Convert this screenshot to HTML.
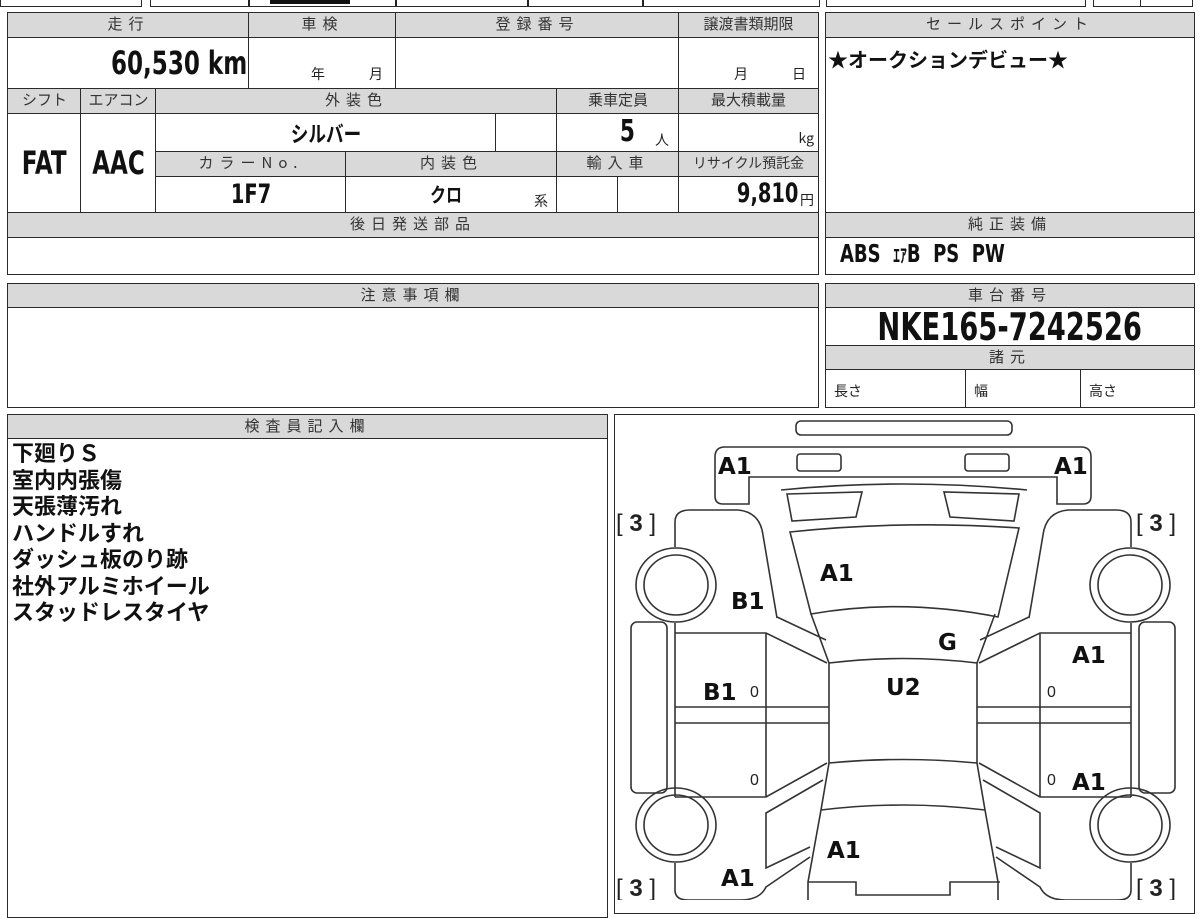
<!DOCTYPE html>
<html><head><meta charset="utf-8">
<style>
*{margin:0;padding:0;box-sizing:border-box}
body{width:1200px;height:900px;background:#fff;position:relative;overflow:hidden;font-family:"Liberation Sans","Noto Sans CJK JP",sans-serif;color:#111}
.c{position:absolute;border:1.5px solid #2a2a2a;background:#fff}
.h{background:#d9d9d9;font-family:"Noto Sans CJK JP",sans-serif;font-size:15px;color:#333;text-align:center;line-height:22px;letter-spacing:6px}
.h2{letter-spacing:0}
.n{font-family:"DejaVu Sans","Liberation Sans",sans-serif;font-weight:bold;color:#111}
.q{display:inline-block;transform:scaleX(.72)}
.s{position:absolute;font-family:"Noto Sans CJK JP",sans-serif;font-size:14px;color:#222}
.jp{font-family:"Noto Sans CJK JP",sans-serif;font-weight:bold}
</style></head><body>
<!-- top strip -->
<div class="c" style="left:0;top:-12px;width:142px;height:19px"></div>
<div class="c" style="left:150px;top:-12px;width:670px;height:19px"></div>
<div style="position:absolute;left:248px;top:0;width:1.5px;height:6px;background:#222"></div>
<div style="position:absolute;left:395px;top:0;width:1.5px;height:6px;background:#222"></div>
<div style="position:absolute;left:527px;top:0;width:1.5px;height:6px;background:#222"></div>
<div style="position:absolute;left:642px;top:0;width:1.5px;height:6px;background:#222"></div>
<div style="position:absolute;left:270px;top:-6px;width:80px;height:10px;background:#111"></div>
<div class="c" style="left:826px;top:-12px;width:260px;height:19px"></div>
<div class="c" style="left:1093px;top:-12px;width:49px;height:19px"></div>
<div class="c" style="left:1140px;top:-12px;width:53px;height:19px"></div>

<!-- main table -->
<div class="c h" style="left:7px;top:12px;width:243px;height:27px">走行</div>
<div class="c h" style="left:248px;top:12px;width:149px;height:27px">車検</div>
<div class="c h" style="left:395px;top:12px;width:285px;height:27px">登録番号</div>
<div class="c h h2" style="left:678px;top:12px;width:141px;height:27px">譲渡書類期限</div>
<div class="c n" style="left:7px;top:37px;width:243px;height:53px;font-size:32px;text-align:right;padding:6px 2px 0 0"><span class="q" style="transform-origin:right">60,530 km</span></div>
<div class="c" style="left:248px;top:37px;width:149px;height:53px"><span class="s" style="left:62px;top:26px">年</span><span class="s" style="left:120px;top:26px">月</span></div>
<div class="c" style="left:395px;top:37px;width:285px;height:53px"></div>
<div class="c" style="left:678px;top:37px;width:141px;height:53px"><span class="s" style="left:55px;top:26px">月</span><span class="s" style="left:113px;top:26px">日</span></div>

<div class="c h h2" style="left:7px;top:88px;width:75px;height:27px">シフト</div>
<div class="c h h2" style="left:80px;top:88px;width:77px;height:27px">エアコン</div>
<div class="c h" style="left:155px;top:88px;width:403px;height:27px">外装色</div>
<div class="c h h2" style="left:556px;top:88px;width:124px;height:27px">乗車定員</div>
<div class="c h h2" style="left:678px;top:88px;width:141px;height:27px">最大積載量</div>
<div class="c n" style="left:7px;top:113px;width:75px;height:101px;font-size:32px;text-align:center;line-height:98px"><span class="q">FAT</span></div>
<div class="c n" style="left:80px;top:113px;width:77px;height:101px;font-size:32px;text-align:center;line-height:98px"><span class="q">AAC</span></div>
<div class="c jp" style="left:155px;top:113px;width:342px;height:40px;font-size:22px;text-align:center;line-height:38px"><span class="q" style="transform:scaleX(.8)">シルバー</span></div>
<div class="c" style="left:495px;top:113px;width:63px;height:40px"></div>
<div class="c" style="left:556px;top:113px;width:124px;height:40px"><span class="n" style="position:absolute;left:60px;top:0;font-size:30px"><span class="q">5</span></span><span class="s" style="left:98px;top:16px">人</span></div>
<div class="c" style="left:678px;top:113px;width:141px;height:40px"><span class="s" style="right:4px;top:14px">kg</span></div>
<div class="c h" style="left:155px;top:151px;width:192px;height:27px">カラーNo.</div>
<div class="c h" style="left:345px;top:151px;width:213px;height:27px">内装色</div>
<div class="c h" style="left:556px;top:151px;width:124px;height:27px">輸入車</div>
<div class="c h h2" style="left:678px;top:151px;width:141px;height:27px;font-size:14px">リサイクル預託金</div>
<div class="c n" style="left:155px;top:176px;width:192px;height:38px;font-size:27px;text-align:center;line-height:36px"><span class="q">1F7</span></div>
<div class="c" style="left:345px;top:176px;width:213px;height:38px"><span class="jp" style="position:absolute;left:80px;top:2px;font-size:20px"><span class="q" style="transform:scaleX(.8)">クロ</span></span><span class="s" style="left:188px;top:14px">系</span></div>
<div class="c" style="left:556px;top:176px;width:63px;height:38px"></div>
<div class="c" style="left:617px;top:176px;width:63px;height:38px"></div>
<div class="c" style="left:678px;top:176px;width:141px;height:38px;text-align:right"><span class="n" style="position:absolute;right:20px;top:1px;font-size:27px"><span class="q" style="transform-origin:right">9,810</span></span><span class="s" style="right:4px;top:13px">円</span></div>
<div class="c h" style="left:7px;top:212px;width:812px;height:27px">後日発送部品</div>
<div class="c" style="left:7px;top:237px;width:812px;height:38px"></div>

<!-- right -->
<div class="c h" style="left:825px;top:12px;width:370px;height:27px">セールスポイント</div>
<div class="c jp" style="left:825px;top:37px;width:370px;height:177px;font-size:20px;padding:6px 0 0 2px">★オークションデビュー★</div>
<div class="c h" style="left:825px;top:212px;width:370px;height:27px">純正装備</div>
<div class="c n" style="left:825px;top:237px;width:370px;height:38px;font-size:25px;padding:1px 0 0 14px"><span class="q" style="transform-origin:left;white-space:nowrap">ABS&nbsp; <span style="font-family:'Noto Sans CJK JP';font-size:19px">ｴｱ</span>B&nbsp; PS&nbsp; PW</span></div>

<div class="c h" style="left:7px;top:283px;width:812px;height:26px">注意事項欄</div>
<div class="c" style="left:7px;top:307px;width:812px;height:101px"></div>

<div class="c h" style="left:825px;top:283px;width:370px;height:26px">車台番号</div>
<div class="c n" style="left:825px;top:307px;width:370px;height:40px;font-size:38px;text-align:center;line-height:38px"><span class="q">NKE165-7242526</span></div>
<div class="c h" style="left:825px;top:345px;width:370px;height:26px">諸元</div>
<div class="c" style="left:825px;top:369px;width:142px;height:39px"><span class="s" style="left:8px;top:11px">長さ</span></div>
<div class="c" style="left:965px;top:369px;width:117px;height:39px"><span class="s" style="left:8px;top:11px">幅</span></div>
<div class="c" style="left:1080px;top:369px;width:115px;height:39px"><span class="s" style="left:8px;top:11px">高さ</span></div>

<div class="c h" style="left:7px;top:414px;width:601px;height:26px">検査員記入欄</div>
<div class="c jp" style="left:7px;top:438px;width:601px;height:480px;font-size:22px;line-height:26.5px;padding:0 0 0 4px">下廻りＳ<br>室内内張傷<br>天張薄汚れ<br>ハンドルすれ<br>ダッシュ板のり跡<br>社外アルミホイール<br>スタッドレスタイヤ</div>

<div class="c" style="left:614px;top:414px;width:581px;height:500px"></div>
<svg style="position:absolute;left:0;top:0" width="1200" height="900" viewBox="0 0 1200 900">
<g fill="none" stroke="#333" stroke-width="1.6">
<rect x="796" y="421" width="216" height="14" rx="5"/>
<path d="M781,490 Q903,478 1027,490"/>
<path d="M790,532 Q903,520 1019,528 L998,617 Q903,598 811,614 Z"/>
<path d="M829,663 Q903,654 977,663"/>
<path d="M829,763 Q903,756 977,763"/>
<path d="M821,810 Q903,800 985,810"/>
<path d="M808,882 H856 V895 H950 V882 H1000"/>
<g id="L">
<path d="M903,447 H725 Q715,447 715,457 V496 Q715,504 723,504 H749 V477 H903"/>
<rect x="797" y="454" width="44" height="17" rx="3"/>
<path d="M787,494 L862,492 L856,517 L792,521 Z"/>
<path d="M811,614 L829,663 M826,640 L777,617 M829,663 V763 L821,810 L808,882 V900"/>
<path d="M675,547 V522 Q675,510 690,510 H738 Q760,512 763,535 L777,618"/>
<ellipse cx="676" cy="585" rx="40" ry="37"/>
<ellipse cx="676" cy="585" rx="32" ry="30"/>
<ellipse cx="676" cy="825" rx="40" ry="37"/>
<ellipse cx="676" cy="825" rx="32" ry="30"/>
<rect x="631" y="622" width="36" height="171" rx="6"/>
<path d="M675,623 V797 M675,633 H766 L827,663 M675,707 H829 M675,723 H829 M766,633 V797 M675,797 H766 L827,763"/>
<path d="M823,780 L766,813 V868 L810,847 M810,857 L766,887 Q760,900 740,900 H688 Q675,900 675,890 V863"/>
</g>
<use href="#L" transform="translate(1806,0) scale(-1,1)"/>
</g>
<g font-family="DejaVu Sans,Liberation Sans,sans-serif" font-weight="bold" font-size="23" fill="#111">
<text x="718" y="474">A1</text><text x="1054" y="474">A1</text>
<text x="820" y="581">A1</text><text x="731" y="609">B1</text>
<text x="938" y="650">G</text><text x="1072" y="663">A1</text>
<text x="703" y="700">B1</text><text x="886" y="695">U2</text>
<text x="1072" y="790">A1</text><text x="827" y="858">A1</text>
<text x="721" y="886">A1</text>
</g>
<g font-family="Liberation Sans,sans-serif" font-size="16" fill="#222">
<text x="750" y="697">0</text><text x="1047" y="697">0</text>
<text x="750" y="785">0</text><text x="1047" y="785">0</text>
</g>
<g font-family="Liberation Sans,sans-serif" font-size="24" fill="#222">
<text x="616" y="531">[ <tspan font-weight="bold">3</tspan> ]</text>
<text x="1136" y="531">[ <tspan font-weight="bold">3</tspan> ]</text>
<text x="616" y="896">[ <tspan font-weight="bold">3</tspan> ]</text>
<text x="1136" y="896">[ <tspan font-weight="bold">3</tspan> ]</text>
</g>
</svg>
</body></html>
